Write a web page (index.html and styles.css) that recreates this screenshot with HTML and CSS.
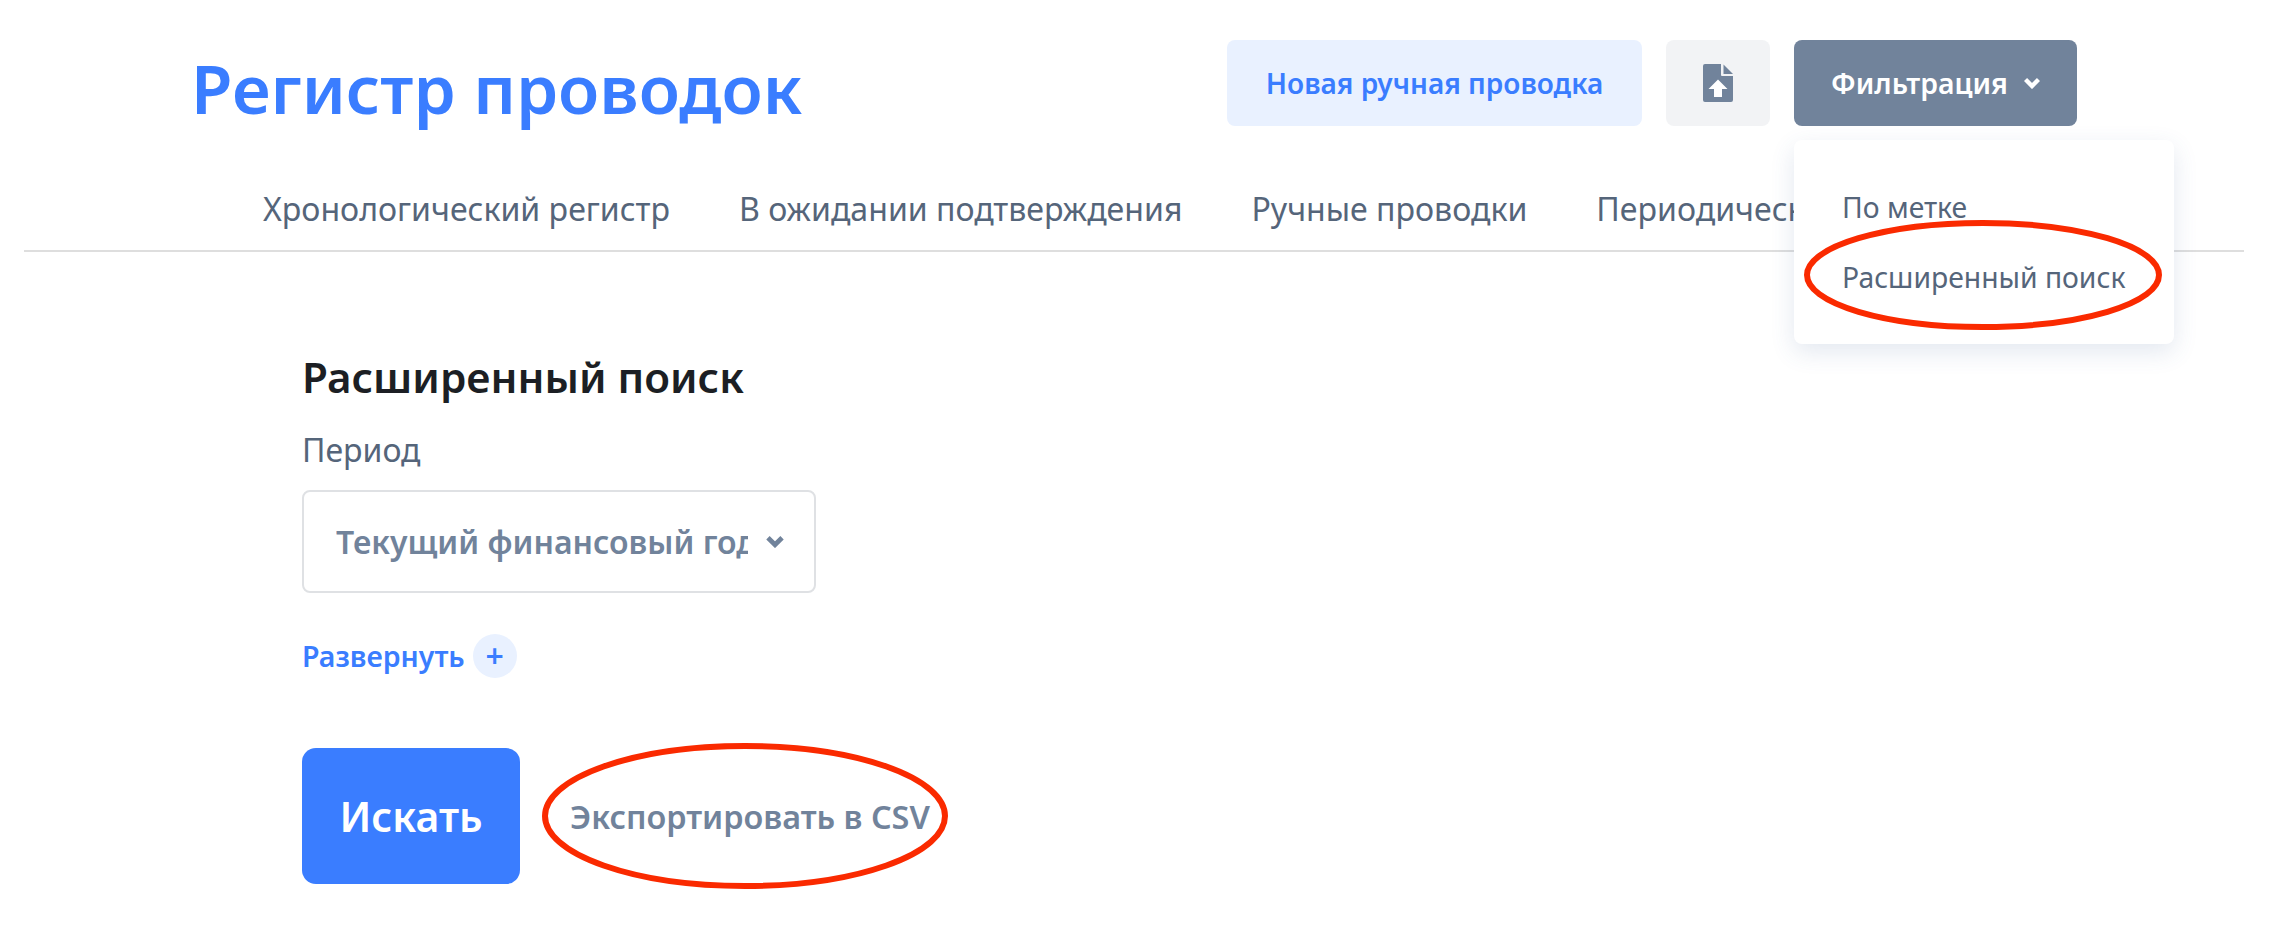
FILE: index.html
```html
<!DOCTYPE html>
<html lang="ru">
<head>
  <meta charset="UTF-8">
  <title>Регистр проводок</title>
  <link rel="stylesheet" href="styles.css">
</head>
<body>
  <header class="page-header">
    <h1>Регистр проводок</h1>
    <div class="actions">
      <button class="btn btn-light">Новая ручная проводка</button>
      <button class="btn btn-icon" aria-label="Загрузить">
        <svg width="30" height="38" viewBox="0 0 30 38"><path d="M2 0h16v11a1 1 0 0 0 1 1h11v24a2 2 0 0 1-2 2H2a2 2 0 0 1-2-2V2a2 2 0 0 1 2-2z" fill="#71839b"/><path d="M20.500 0.500L30 10H20.500z" fill="#71839b"/><path d="M15 15.500L24.500 25H19v8h-8v-8H5.500z" fill="#fff"/></svg>
      </button>
      <div class="dropdown">
        <button class="btn btn-filter">Фильтрация
          <svg class="chevron" width="16" height="12" viewBox="0 0 16 12"><path d="M1.500 2.500l6.500 6.500 6.500-6.500" fill="none" stroke="currentColor" stroke-width="4.400"/></svg>
        </button>
        <div class="dropdown-menu">
          <a>По метке</a>
          <a>Расширенный поиск</a>
          <svg class="mark mark-menu" width="362" height="112" viewBox="0 0 362 112"><ellipse cx="180" cy="56" rx="176" ry="52" fill="none" stroke="#fa2a00" stroke-width="6"/></svg>
        </div>
      </div>
    </div>
  </header>

  <nav class="tabs">
    <a>Хронологический регистр</a>
    <a>В ожидании подтверждения</a>
    <a>Ручные проводки</a>
    <a>Периодические проводки</a>
  </nav>

  <main>
    <h2>Расширенный поиск</h2>
    <label class="field-label">Период</label>
    <div class="select">
      <span class="select-value">Текущий финансовый год</span>
      <svg class="chevron" width="18" height="13" viewBox="0 0 16 12"><path d="M1.500 2.500l6.500 6.500 6.500-6.500" fill="none" stroke="currentColor" stroke-width="4.400"/></svg>
    </div>
    <a class="expand">Развернуть <span class="expand-icon">+</span></a>
    <div class="form-actions">
      <button class="btn-search">Искать</button>
      <a class="export">Экспортировать в CSV
        <svg class="mark mark-export" width="408" height="150" viewBox="0 0 408 150"><ellipse cx="203" cy="74" rx="200" ry="70" fill="none" stroke="#fa2a00" stroke-width="6"/></svg>
      </a>
    </div>
  </main>
</body>
</html>
```

FILE: styles.css
```css
* {
  box-sizing: border-box;
}

body {
  font-family: "Noto Sans", sans-serif;
  background-color: #fff;
  color: #55657a;
  margin: 0;
  height: 934px;
  overflow: hidden;
}

button {
  font-family: inherit;
  border: none;
}

.page-header {
  display: flex;
  justify-content: space-between;
  align-items: flex-start;
  padding: 40px 203px 0 191px;
  height: 162px;
}

h1 {
  font-size: 67.5px;
  font-weight: 600;
  line-height: 96px;
  color: #3a7dff;
  margin: 0;
}

.actions {
  display: flex;
  gap: 24px;
}

.btn {
  height: 86px;
  border-radius: 8px;
  font-size: 28px;
  font-weight: 600;
}

.btn-light {
  width: 415px;
  background-color: #e9f1ff;
  color: #3a7dff;
}

.btn-icon {
  width: 104px;
  background-color: #f2f3f5;
  display: flex;
  align-items: center;
  justify-content: center;
}

.btn-filter {
  width: 283px;
  background-color: #71839b;
  color: #fff;
  font-size: 28.4px;
  display: flex;
  align-items: center;
  justify-content: center;
  gap: 16px;
}

.dropdown {
  position: relative;
}

.dropdown-menu {
  position: absolute;
  top: 100px;
  left: 0;
  width: 380px;
  height: 204px;
  padding: 48px 0 0 48px;
  background-color: #fff;
  border-radius: 8px;
  box-shadow: 0 8px 24px rgba(60, 90, 150, 0.14);
  font-size: 28.3px;
  z-index: 2;
}

.dropdown-menu a {
  display: block;
  line-height: 38px;
  margin-bottom: 32px;
  white-space: nowrap;
}

.mark {
  position: absolute;
  pointer-events: none;
}

.mark-menu {
  left: 9px;
  top: 79px;
}

.tabs {
  display: flex;
  gap: 69px;
  margin: 0 36px 0 24px;
  padding: 25px 0 0 239px;
  height: 90px;
  border-bottom: 2px solid #dedede;
  font-size: 32.1px;
  line-height: 44px;
  white-space: nowrap;
  overflow: hidden;
}

main {
  padding: 98px 0 0 302px;
}

h2 {
  font-size: 42.2px;
  font-weight: 600;
  line-height: 54px;
  color: #1c1f24;
  margin: 0 0 24px;
}

.field-label {
  display: block;
  font-size: 32px;
  line-height: 44px;
  margin-bottom: 18px;
}

.select {
  display: flex;
  align-items: center;
  justify-content: space-between;
  width: 514px;
  height: 103px;
  padding: 0 30px 0 32px;
  border: 2px solid #dfe1e4;
  border-radius: 8px;
  color: #71839b;
}

.select-value {
  width: 412px;
  font-size: 32px;
  font-weight: 600;
  white-space: nowrap;
  overflow: hidden;
}

.expand {
  display: flex;
  align-items: center;
  gap: 8px;
  margin-top: 41px;
  color: #3a7dff;
  font-size: 28.5px;
  font-weight: 600;
}

.expand-icon {
  display: flex;
  align-items: center;
  justify-content: center;
  width: 44px;
  height: 44px;
  border-radius: 50%;
  background-color: #e9f1ff;
  font-size: 32px;
  line-height: 1;
}

.form-actions {
  display: flex;
  align-items: center;
  gap: 50px;
  margin-top: 70px;
}

.btn-search {
  width: 218px;
  height: 136px;
  border-radius: 14px;
  background-color: #3a7dff;
  color: #fff;
  font-size: 41px;
  font-weight: 600;
}

.export {
  position: relative;
  font-size: 32.4px;
  font-weight: 600;
  color: #71839b;
  white-space: nowrap;
}

.mark-export {
  left: -28px;
  top: -52px;
}
```
